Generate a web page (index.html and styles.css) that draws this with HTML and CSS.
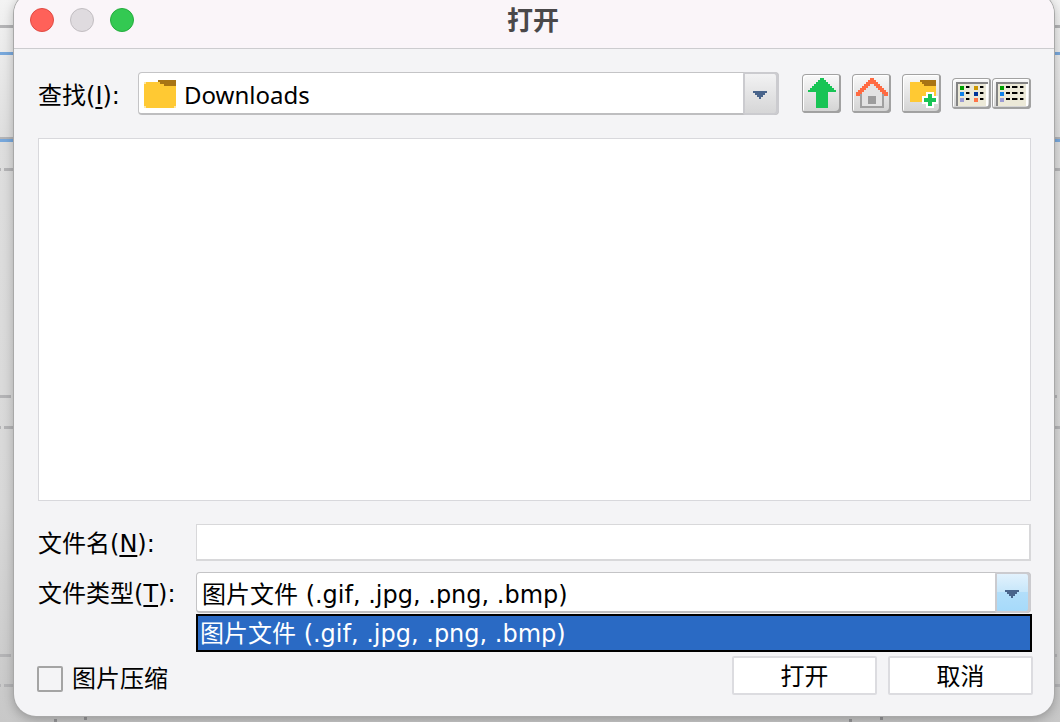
FILE: index.html
```
<!DOCTYPE html>
<html lang="zh-CN">
<head>
<meta charset="utf-8">
<meta name="viewport" content="width=device-width, initial-scale=1">
<title>打开</title>
<link rel="stylesheet" href="styles.css">
</head>
<body>
<div class="backdrop" aria-hidden="true">
  <i class="rule" style="top:25px"></i>
  <i class="rule blue" style="top:52px"></i>
  <i class="rule" style="top:137px"></i>
  <i class="rule blue" style="top:139px"></i>
  <i class="rule dash" style="top:168px"></i>
  <i class="rule short" style="top:395px"></i>
  <i class="rule dash" style="top:426px"></i>
  <i class="rule short" style="top:654px"></i>
  <i class="rule dash" style="top:684px"></i>
  <i class="tick" style="left:54px"></i>
  <i class="tick tall" style="left:84px"></i>
  <i class="tick" style="left:849px"></i>
  <i class="tick tall" style="left:880px"></i>
</div>
<main class="dialog">
  <header class="titlebar">
    <div class="lights">
      <button class="light close" type="button" aria-label="关闭"></button>
      <button class="light minimize" type="button" aria-label="最小化" disabled></button>
      <button class="light maximize" type="button" aria-label="缩放"></button>
    </div>
    <h1 class="title">打开</h1>
  </header>
  <form class="content">
    <div class="lookup">
      <label class="lookup-label" for="folder">查找(<u>I</u>):</label>
      <div class="combo">
        <select id="folder" class="combo-field with-icon"><option>Downloads</option></select>
        <svg class="combo-icon" width="32" height="28" viewBox="0 0 32 28" shape-rendering="crispEdges"><path fill="#ffc933" d="M2 2h30v24h-2v2H2v-2H0V4h2z"/><path fill="#a87414" d="M14 0h18v6H20V4h-4V2h-2z"/><path fill="#ffe8a8" d="M0 2h2v2H0zM0 26h2v2H0zM30 26h2v2h-2z"/></svg>
        <span class="combo-arrow"><svg width="14" height="8" viewBox="0 0 14 8" shape-rendering="crispEdges"><path fill="#49648b" d="M0 0h14v2h-2v2h-2v2H8v2H6V6H4V4H2V2H0z"/></svg></span>
      </div>
      <div class="tools">
        <button class="tool" type="button" aria-label="向上一级">
          <svg width="39" height="39" viewBox="0 0 39 39" shape-rendering="crispEdges"><path fill="#18c455" d="M18 4h4v2h2v2h2v2h2v2h2v2h2v2h2v2h-8v16H14V18H6v-2h2v-2h2v-2h2v-2h2V8h2V6h2z"/></svg>
        </button>
        <button class="tool" type="button" aria-label="主目录">
          <svg width="39" height="39" viewBox="0 0 39 39" shape-rendering="crispEdges"><path fill="#a0a0a0" d="M8 16h24v18H8z"/><path fill="#e3e3e3" d="M18 9h4l8 9v14H10V18z"/><path fill="#9c9c9c" d="M16 22h8v8h-8z"/><path fill="#ff6b42" d="M18 4h4v2h2v2h2v2h2v2h2v2h2v2h2v2h2v4h-4v-2h-2v-2h-2v-2h-2v-2h-2v-2h-2v-2h-4v2h-2v2h-2v2h-2v2h-2v2H8v2H4v-4h2v-2h2v-2h2v-2h2v-2h2V8h2V6h2z"/></svg>
        </button>
        <button class="tool" type="button" aria-label="新建文件夹">
          <svg width="39" height="39" viewBox="0 0 39 39" shape-rendering="crispEdges"><path fill="#ffc933" d="M8 8h26v20H8z"/><path fill="#a87414" d="M18 6h16v6H22v-2h-2V8h-2z"/><path fill="#fff" d="M24 18h8v4h4v8h-4v4h-8v-4h-4v-8h4z"/><path fill="#18c455" d="M26 20h4v4h4v4h-4v4h-4v-4h-4v-4h4z"/></svg>
        </button>
        <div class="views">
          <button class="tool view" type="button" aria-label="列表">
            <svg width="39" height="31" viewBox="0 0 39 31" shape-rendering="crispEdges"><path fill="#848484" d="M4 4h32v24H4z"/><path fill="#ece9d8" d="M6 6h30v22H6z"/><path fill="#fff" d="M34 6h2v22h-2z"/><path fill="#00a000" d="M8 8h4v4H8z"/><path fill="#1080e8" d="M8 14h4v4H8z"/><path fill="#9c9cd4" d="M8 20h4v4H8z"/><path fill="#cc9800" d="M22 8h4v4h-4z"/><path fill="#003498" d="M22 14h4v4h-4z"/><path fill="#ff7448" d="M22 20h4v4h-4z"/><path fill="#000" d="M14 8h3v2h-3zM14 14h3v2h-3zM14 20h3v2h-3zM28 8h3v2h-3zM28 14h3v2h-3zM28 20h3v2h-3z"/><path fill="#88867c" d="M17 8h1v2h-1zM17 14h1v2h-1zM17 20h1v2h-1zM31 8h1v2h-1zM31 14h1v2h-1zM31 20h1v2h-1z"/></svg>
          </button>
          <button class="tool view" type="button" aria-label="详细信息">
            <svg width="39" height="31" viewBox="0 0 39 31" shape-rendering="crispEdges"><path fill="#848484" d="M4 4h32v24H4z"/><path fill="#ece9d8" d="M6 6h30v22H6z"/><path fill="#fff" d="M34 6h2v22h-2z"/><path fill="#00a000" d="M8 8h4v4H8z"/><path fill="#1080e8" d="M8 14h4v4H8z"/><path fill="#9c9cd4" d="M8 20h4v4H8z"/><path fill="#000" d="M14 8h4v2h-4zM14 14h4v2h-4zM14 20h4v2h-4zM20 8h5v2h-5zM20 14h5v2h-5zM20 20h5v2h-5zM28 8h3v2h-3zM28 14h3v2h-3zM28 20h3v2h-3z"/><path fill="#88867c" d="M25 8h1v2h-1zM25 14h1v2h-1zM25 20h1v2h-1zM31 8h1v2h-1zM31 14h1v2h-1zM31 20h1v2h-1z"/></svg>
          </button>
        </div>
      </div>
    </div>
    <div class="files" role="listbox" aria-label="文件"></div>
    <div class="fields">
      <label for="name">文件名(<u>N</u>):</label>
      <input id="name" class="name-field" type="text">
      <label for="type">文件类型(<u>T</u>):</label>
      <div class="combo active">
        <select id="type" class="combo-field"><option>图片文件 (.gif, .jpg, .png, .bmp)</option></select>
        <span class="combo-arrow"><svg width="14" height="8" viewBox="0 0 14 8" shape-rendering="crispEdges"><path fill="#49648b" d="M0 0h14v2h-2v2h-2v2H8v2H6V6H4V4H2V2H0z"/></svg></span>
        <div class="popup" role="listbox" aria-label="文件类型"><div role="option" aria-selected="true">图片文件 (.gif, .jpg, .png, .bmp)</div></div>
      </div>
    </div>
    <div class="footer">
      <label class="check"><input type="checkbox">图片压缩</label>
      <div class="actions">
        <button class="action" type="button">打开</button>
        <button class="action" type="button">取消</button>
      </div>
    </div>
  </form>
</main>
</body>
</html>
```
FILE: styles.css
```
* { box-sizing: border-box; }
body {
  margin: 0;
  min-height: 100vh;
  display: flex;
  flex-direction: column;
  overflow: hidden;
  background: linear-gradient(#f3f3f3, #dedede 140px, #d8d8d8 70%, #c8c8c8);
  color: #000;
  font: 24px/36px "DejaVu Sans", "Noto Sans CJK SC", sans-serif;
}
button, input, select { font: inherit; color: inherit; margin: 0; }

.backdrop { position: absolute; inset: 0; overflow: hidden; }
.rule { position: absolute; left: 0; right: 0; height: 3px; background: #b4b4b6; }
.rule.blue { background: #78a8dc; }
.rule.dash { background: linear-gradient(90deg, #b4b4b6 1px, transparent 1px, transparent 4px, #b4b4b6 4px); }
.rule.short { left: 0; right: 3px; background: linear-gradient(90deg, #b4b4b6 11px, transparent 11px, transparent 14px, #b4b4b6 14px); }
.tick { position: absolute; bottom: 0; width: 3px; height: 3px; background: #969698; }
.tick.tall { bottom: 2px; height: 4px; }

.dialog {
  position: relative;
  flex: 1;
  display: flex;
  flex-direction: column;
  margin: -8px 6px 6px 14px;
  border-radius: 22px;
  background: #f4f4f6;
  box-shadow: 0 0 0 1px #a8a8a8, 0 3px 12px rgba(0, 0, 0, .28);
}
.titlebar {
  display: grid;
  grid-template-columns: 1fr auto 1fr;
  align-items: center;
  height: 57px;
  padding: 0 18px 0 16px;
  border-bottom: 1px solid #cccccf;
  border-radius: 22px 22px 0 0;
  background: #faf5f9;
}
.lights { display: flex; gap: 16px; }
.light { width: 24px; height: 24px; padding: 0; border: 1px solid; border-radius: 50%; }
.light.close { background: #ff6159; border-color: #e04a43; }
.light.minimize { background: #dfdbdf; border-color: #c2bec2; }
.light.maximize { background: #33c952; border-color: #24ad3d; }
.title { margin: 0; padding-bottom: 2px; color: #4a484a; font-size: 26px; font-weight: 700; line-height: 36px; font-family: "Noto Sans CJK SC", sans-serif; }

.content { flex: 1; display: flex; flex-direction: column; padding: 23px 23px 21px 24px; }
.lookup { display: flex; align-items: center; height: 43px; }
.lookup-label { width: 100px; padding-top: 4px; }
u { text-decoration-thickness: 2px; text-underline-offset: 3px; }

.combo { position: relative; flex: 1; display: flex; height: 43px; }
.combo-field {
  flex: 1;
  appearance: none;
  padding: 4px 40px 0 5px;
  border: 1px solid #c4c4c6;
  border-bottom: 2px solid #bebec0;
  border-radius: 4px;
  background: #fff;
  outline: 0;
}
.combo-field.with-icon { padding-left: 45px; font-family: "Noto Sans", sans-serif; }
.combo-icon { position: absolute; left: 6px; top: 8px; pointer-events: none; }
.combo-arrow {
  position: absolute;
  top: 0; right: 0; bottom: 0;
  width: 36px;
  display: flex;
  align-items: center;
  justify-content: center;
  padding: 2px 2px 0 0;
  border: 2px solid #cbcbcf;
  border-right-width: 3px;
  border-radius: 2px 5px 5px 2px;
  background: linear-gradient(#f2f2f3, #d6d6d7);
  pointer-events: none;
}
.combo.active { height: 41px; }
.combo.active .combo-arrow { background: linear-gradient(#e2f2fd, #c6e6fa 50%, #b2defa 50%, #a6dafa); }
.popup {
  position: absolute;
  top: 42px; left: 0; right: -1px;
  height: 38px;
  padding: 0 2px;
  border: 2px solid #000;
  background: #2a6ac4;
  color: #fff;
  line-height: 36px;
}

.tools { display: flex; align-items: center; gap: 11px; margin-left: 23px; }
.views { display: flex; gap: 1px; }
.tool {
  width: 39px;
  height: 39px;
  padding: 0;
  border: 0;
  border-radius: 4px;
  background: linear-gradient(#fafafa, #d2d2d2);
  box-shadow: inset 0 0 0 1px #a2a2a2, inset -2px -2px 0 #a0a0a0, inset 2px 2px 0 #fff;
}
.tool svg { display: block; }
.tool.view { height: 31px; }

.files {
  flex: 1;
  margin-top: 23px;
  border: 1px solid #d8d8dc;
  background: #fff;
}
.fields {
  display: grid;
  grid-template-columns: 158px 1fr;
  row-gap: 11px;
  align-items: center;
  margin-top: 23px;
}
.fields label { padding-top: 2px; line-height: 34px; }
.name-field {
  width: 100%;
  height: 37px;
  padding: 0 6px;
  border: 1px solid #d8d8da;
  border-right-width: 2px;
  border-bottom-width: 2px;
  background: #fff;
  outline: 0;
}
.footer { display: flex; align-items: flex-start; justify-content: space-between; height: 39px; margin: 43px -2px 0 -1px; }
.check { display: flex; align-items: center; gap: 9px; padding-top: 5px; }
.check input { appearance: none; width: 26px; height: 26px; border: 2px solid #a4a4a4; border-radius: 2px; background: #f4f4f6; }
.actions { display: flex; gap: 11px; }
.action { width: 145px; height: 39px; padding: 2px 0 0; border: 2px solid #dcdce0; border-radius: 2px; background: #fff; line-height: 32px; }
```
